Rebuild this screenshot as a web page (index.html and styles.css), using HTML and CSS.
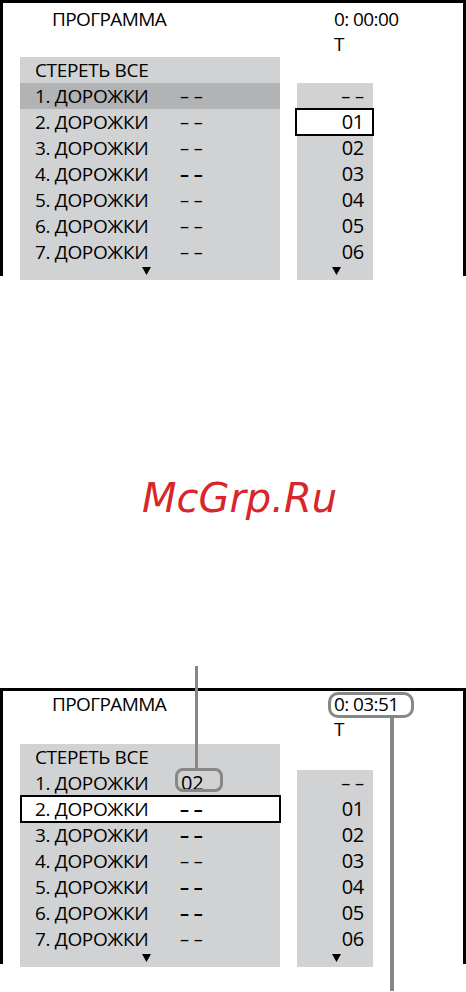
FILE: index.html
```html
<!DOCTYPE html>
<html lang="ru">
<head>
<meta charset="utf-8">
<title>ПРОГРАММА</title>
<link rel="stylesheet" href="styles.css">
</head>
<body>
<div class="page">
  <section class="screen s1">
    <div class="head">
      <div class="title">ПРОГРАММА</div>
      <div class="clock"><div class="time"><span class="tv">0: 00:00</span></div><div class="t">T</div></div>
    </div>
    <div class="body">
      <div class="list">
        <div class="row"><span class="name">СТЕРЕТЬ ВСЕ</span></div>
        <div class="row hl"><span class="name">1. ДОРОЖКИ</span><span class="val">– –</span></div>
        <div class="row"><span class="name">2. ДОРОЖКИ</span><span class="val">– –</span></div>
        <div class="row"><span class="name">3. ДОРОЖКИ</span><span class="val">– –</span></div>
        <div class="row"><span class="name">4. ДОРОЖКИ</span><span class="val b">– –</span></div>
        <div class="row"><span class="name">5. ДОРОЖКИ</span><span class="val">– –</span></div>
        <div class="row"><span class="name">6. ДОРОЖКИ</span><span class="val">– –</span></div>
        <div class="row"><span class="name">7. ДОРОЖКИ</span><span class="val">– –</span></div>
        <div class="more"><svg width="9" height="8" viewBox="0 0 9 8"><polygon points="0,0 9,0 4.5,8" fill="#000"/></svg></div>
      </div>
      <div class="col">
        <div class="cell dash">– –</div>
        <div class="cell sel">01</div>
        <div class="cell">02</div>
        <div class="cell">03</div>
        <div class="cell">04</div>
        <div class="cell">05</div>
        <div class="cell">06</div>
        <div class="more more-r"><svg width="9" height="8" viewBox="0 0 9 8"><polygon points="0,0 9,0 4.5,8" fill="#000"/></svg></div>
      </div>
    </div>
  </section>

  <div class="wm">McGrp.Ru</div>

  <section class="screen s2">
    <div class="head">
      <div class="title">ПРОГРАММА</div>
      <div class="clock"><div class="time"><span class="tv callout-clock">0: 03:51</span></div><div class="t">T</div></div>
    </div>
    <div class="body">
      <div class="list">
        <div class="row"><span class="name">СТЕРЕТЬ ВСЕ</span></div>
        <div class="row"><span class="name">1. ДОРОЖКИ</span><span class="val callout">02</span></div>
        <div class="row sel-row"><span class="name">2. ДОРОЖКИ</span><span class="val b">– –</span></div>
        <div class="row"><span class="name">3. ДОРОЖКИ</span><span class="val b">– –</span></div>
        <div class="row"><span class="name">4. ДОРОЖКИ</span><span class="val">– –</span></div>
        <div class="row"><span class="name">5. ДОРОЖКИ</span><span class="val b">– –</span></div>
        <div class="row"><span class="name">6. ДОРОЖКИ</span><span class="val b">– –</span></div>
        <div class="row"><span class="name">7. ДОРОЖКИ</span><span class="val">– –</span></div>
        <div class="more"><svg width="9" height="8" viewBox="0 0 9 8"><polygon points="0,0 9,0 4.5,8" fill="#000"/></svg></div>
      </div>
      <div class="col">
        <div class="cell dash">– –</div>
        <div class="cell">01</div>
        <div class="cell">02</div>
        <div class="cell">03</div>
        <div class="cell">04</div>
        <div class="cell">05</div>
        <div class="cell">06</div>
        <div class="more more-r"><svg width="9" height="8" viewBox="0 0 9 8"><polygon points="0,0 9,0 4.5,8" fill="#000"/></svg></div>
      </div>
    </div>
  </section>
</div>
</body>
</html>
```
FILE: styles.css
```css
* { box-sizing: border-box; }
html, body { margin: 0; padding: 0; background: #fff; }
body {
  width: 466px;
  height: 992px;
  overflow: hidden;
  font-family: "Open Sans", "Noto Sans", sans-serif;
  color: #000;
}
.page { display: flex; flex-direction: column; }

.screen {
  height: 276px;
  border: 3px solid #000;
  border-bottom: none;
}

.head {
  display: grid;
  grid-template-columns: 282px 1fr;
  padding-left: 49px;
  font-size: 19px;
  line-height: 25px;
  letter-spacing: -0.6px;
}
.s1 .head { height: 54px; padding-top: 4px; }
.s2 .head { height: 53px; padding-top: 1px; }

.title { white-space: nowrap; }
.clock { white-space: nowrap; }
.tv { display: inline-block; position: relative; }

.body {
  display: flex;
  padding-left: 17px;
  gap: 17px;
}

.list {
  width: 260px;
  height: 223px;
  background: #d1d2d4;
  flex: none;
}
.row {
  display: flex;
  height: 26px;
  line-height: 26px;
  font-size: 19px;
  white-space: nowrap;
}
.row .name { width: 160px; padding-left: 15px; letter-spacing: -0.35px; flex: none; }
.row .val { display: inline-block; width: 23px; font-size: 18px; letter-spacing: 0; }
.row .val.b { font-weight: 700; }
.row .val.callout { font-size: 20px; letter-spacing: -0.3px; padding-left: 1px; }
.row.hl { background: #b2b3b5; }

.sel-row {
  background: #fff;
  border: 2px solid #000;
  height: 28px;
  line-height: 24px;
  margin: -1px -1px -1px 0;
}
.sel-row .name { padding-left: 13px; width: 158px; }

.more {
  height: 15px;
  padding-top: 2px;
  padding-left: 122px;
  line-height: 0;
}
.more-r { padding-left: 35px; }

.col {
  width: 76px;
  height: 197px;
  margin-top: 26px;
  background: #d1d2d4;
  flex: none;
}
.cell {
  height: 26px;
  line-height: 26px;
  font-size: 20px;
  text-align: right;
  padding-right: 9px;
  letter-spacing: -0.3px;
}
.cell.dash { font-size: 18px; letter-spacing: 0; }
.cell.sel {
  background: #fff;
  border: 2px solid #000;
  height: 28px;
  line-height: 24px;
  margin: -1px -1px -1px -2px;
  padding-right: 8px;
}

.wm {
  height: 412px;
  padding-top: 198px;
  padding-left: 13px;
  text-align: center;
  font-family: "DejaVu Sans", sans-serif;
  font-style: oblique;
  font-size: 40px;
  line-height: 48px;
  color: #d8262a;
}

/* annotations */
.callout { position: relative; }
.callout::after {
  content: "";
  position: absolute;
  left: -5px;
  right: -20px;
  top: -2px;
  bottom: 4px;
  border: 3px solid #878787;
  border-radius: 8px;
}
.callout::before {
  content: "";
  position: absolute;
  left: 15px;
  width: 3px;
  top: -104px;
  height: 102px;
  background: #878787;
}
.callout-clock::after {
  content: "";
  position: absolute;
  left: -6px;
  right: -16px;
  top: 0;
  bottom: -1px;
  border: 3px solid #878787;
  border-radius: 10px;
}
.callout-clock::before {
  content: "";
  position: absolute;
  left: 56px;
  width: 4px;
  top: 100%;
  height: 274px;
  background: #878787;
}
```
